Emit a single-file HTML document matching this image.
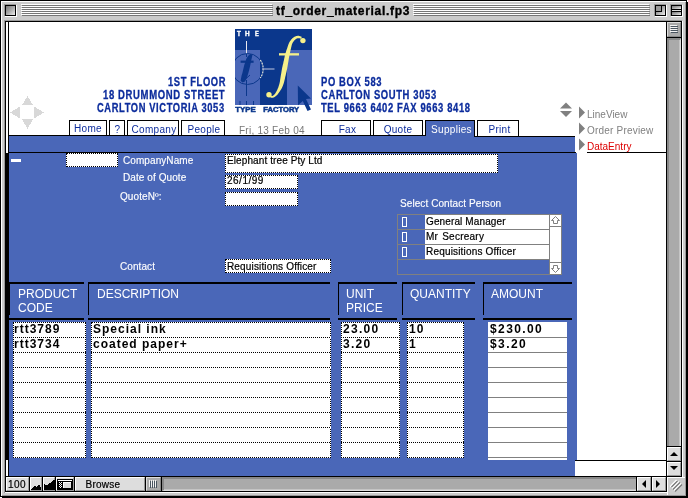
<!DOCTYPE html>
<html><head><meta charset="utf-8"><style>
*{margin:0;padding:0;box-sizing:border-box}
html,body{width:688px;height:498px;overflow:hidden;background:#fff;position:relative;font-family:"Liberation Sans",sans-serif}
.a{position:absolute}
.k{background:#000}
.w{background:#fff}
.g{background:#ccc}
.bl{background:#4a67b8}
.t{position:absolute;white-space:pre;line-height:12px;margin-top:1px}
.lab{font-size:10px;color:#fff;letter-spacing:0.08px;-webkit-text-stroke:0.15px #fff}
.fld{position:absolute;background:#fff;border:1px dotted #000}
.tab{position:absolute;top:120px;height:16px;border:1px solid #000;border-bottom:none;background:#fff;color:#0c2c9c;font-size:10px;text-align:center;line-height:16px;letter-spacing:0.3px}
.adr{position:absolute;font-weight:bold;font-size:12px;color:#0c2c9c;-webkit-text-stroke:0.3px #0c2c9c;white-space:pre;line-height:13px;margin-top:1px}
.hd{position:absolute;color:#fff;font-size:12px;line-height:14px;white-space:pre}
.dt{position:absolute;font-weight:bold;font-size:12px;letter-spacing:1px;line-height:15px;white-space:pre;color:#000;margin-top:1px}
</style></head><body>
<div style="position:absolute;left:0;top:0;width:688px;height:498px;background:#fff;will-change:transform">

<!-- window frame -->
<div class="a g" style="left:0;top:0;width:687px;height:497px;border:1px solid #000"></div>
<div class="a k" style="left:687px;top:2px;width:1px;height:496px"></div>
<div class="a k" style="left:2px;top:497px;width:686px;height:1px"></div>
<div class="a w" style="left:1px;top:1px;width:685px;height:1px"></div>
<div class="a w" style="left:1px;top:1px;width:1px;height:495px"></div>
<div class="a" style="left:685px;top:2px;width:1px;height:494px;background:#999"></div>
<div class="a" style="left:2px;top:495px;width:684px;height:1px;background:#999"></div>
<div class="a" style="left:4px;top:20px;width:678px;height:1px;background:#999"></div>
<div class="a" style="left:4px;top:20px;width:1px;height:473px;background:#999"></div>
<div class="a w" style="left:682px;top:21px;width:1px;height:472px"></div>
<div class="a w" style="left:5px;top:492px;width:678px;height:1px"></div>
<div class="a k" style="left:5px;top:21px;width:677px;height:471px"></div>

<!-- title bar stripes -->
<svg class="a" style="left:0;top:0" width="688" height="20" shape-rendering="crispEdges">
<g fill="#fff"><rect x="21" y="4" width="251" height="1"/><rect x="21" y="6" width="251" height="1"/><rect x="21" y="8" width="251" height="1"/><rect x="21" y="10" width="251" height="1"/><rect x="21" y="12" width="251" height="1"/><rect x="21" y="14" width="251" height="1"/>
<rect x="413" y="4" width="236" height="1"/><rect x="413" y="6" width="236" height="1"/><rect x="413" y="8" width="236" height="1"/><rect x="413" y="10" width="236" height="1"/><rect x="413" y="12" width="236" height="1"/><rect x="413" y="14" width="236" height="1"/></g>
<g fill="#777"><rect x="22" y="5" width="251" height="1"/><rect x="22" y="7" width="251" height="1"/><rect x="22" y="9" width="251" height="1"/><rect x="22" y="11" width="251" height="1"/><rect x="22" y="13" width="251" height="1"/><rect x="22" y="15" width="251" height="1"/>
<rect x="414" y="5" width="236" height="1"/><rect x="414" y="7" width="236" height="1"/><rect x="414" y="9" width="236" height="1"/><rect x="414" y="11" width="236" height="1"/><rect x="414" y="13" width="236" height="1"/><rect x="414" y="15" width="236" height="1"/></g>
<!-- close box -->
<rect x="4" y="4" width="12" height="1" fill="#999"/><rect x="4" y="4" width="1" height="12" fill="#999"/>
<rect x="5" y="16" width="12" height="1" fill="#fff"/><rect x="16" y="5" width="1" height="12" fill="#fff"/>
<rect x="5" y="5" width="11" height="11" fill="#000"/>
<defs><linearGradient id="cg" x1="0" y1="0" x2="1" y2="1"><stop offset="0" stop-color="#777"/><stop offset="0.5" stop-color="#aaa"/><stop offset="1" stop-color="#eee"/></linearGradient>
<linearGradient id="cg2" x1="0" y1="0" x2="1" y2="1"><stop offset="0" stop-color="#eee"/><stop offset="1" stop-color="#999"/></linearGradient></defs>
<rect x="6" y="6" width="9" height="9" fill="url(#cg)"/>
<!-- zoom box -->
<rect x="654" y="4" width="12" height="1" fill="#999"/><rect x="654" y="4" width="1" height="12" fill="#999"/>
<rect x="655" y="16" width="12" height="1" fill="#fff"/><rect x="666" y="5" width="1" height="12" fill="#fff"/>
<rect x="655" y="5" width="11" height="11" fill="#000"/>
<rect x="656" y="6" width="9" height="9" fill="url(#cg)"/>
<rect x="661" y="5" width="1" height="7" fill="#000"/><rect x="655" y="11" width="7" height="1" fill="#000"/>
<rect x="656" y="6" width="5" height="5" fill="#999"/>
<!-- collapse box -->
<rect x="670" y="4" width="12" height="1" fill="#999"/><rect x="670" y="4" width="1" height="12" fill="#999"/>
<rect x="671" y="16" width="12" height="1" fill="#fff"/><rect x="682" y="5" width="1" height="12" fill="#fff"/>
<rect x="671" y="5" width="11" height="11" fill="#000"/>
<rect x="672" y="6" width="9" height="3" fill="url(#cg)"/>
<rect x="672" y="10" width="9" height="1" fill="#ddd"/>
<rect x="672" y="12" width="9" height="3" fill="url(#cg)"/>
</svg>
<div class="t" style="left:276px;top:4px;font-weight:bold;font-size:12px;letter-spacing:0.7px;color:#000;-webkit-text-stroke:0.35px #000">tf_order_material.fp3</div>

<!-- content white area -->
<div class="a w" style="left:6px;top:22px;width:660px;height:454px"></div>
<div class="a k" style="left:8px;top:22px;width:1px;height:454px"></div>
<div class="a k" style="left:6px;top:153px;width:3px;height:307px"></div>

<!-- vertical scrollbar -->
<div class="a" style="left:667px;top:22px;width:14px;height:15px;background:#aaa;border-top:1px solid #ddd;border-left:1px solid #ddd;border-right:1px solid #888;border-bottom:1px solid #888"></div>
<svg class="a" style="left:667px;top:22px" width="14" height="15" shape-rendering="crispEdges">
<g fill="#f4f4f4"><rect x="3" y="3" width="7" height="1"/><rect x="3" y="5" width="7" height="1"/><rect x="3" y="7" width="7" height="1"/><rect x="3" y="9" width="7" height="1"/></g>
<g fill="#4a5560"><rect x="4" y="4" width="7" height="1"/><rect x="4" y="6" width="7" height="1"/><rect x="4" y="8" width="7" height="1"/><rect x="4" y="10" width="7" height="1"/></g>
</svg>
<div class="a k" style="left:667px;top:37px;width:14px;height:1px"></div>
<div class="a" style="left:667px;top:38px;width:14px;height:408px;background:#aaa;border-top:2px solid #888;border-left:2px solid #888;border-right:1px solid #ddd;box-shadow:inset -1px 0 #c4c4c4"></div>
<div class="a k" style="left:667px;top:446px;width:14px;height:1px"></div>
<div class="a" style="left:667px;top:447px;width:14px;height:14px;background:#ddd;border-top:1px solid #fff;border-left:1px solid #fff;border-right:1px solid #999;border-bottom:1px solid #999"></div>
<div class="a k" style="left:667px;top:461px;width:14px;height:1px"></div>
<div class="a" style="left:667px;top:462px;width:14px;height:14px;background:#ddd;border-top:1px solid #fff;border-left:1px solid #fff;border-right:1px solid #999;border-bottom:1px solid #999"></div>
<svg class="a" style="left:667px;top:447px" width="14" height="29">
<path d="M3 9 L11 9 L7 5 Z" fill="#000"/>
<path d="M3 19 L11 19 L7 23 Z" fill="#000"/>
</svg>

<!-- status bar -->
<div class="a" style="left:6px;top:477px;width:23px;height:14px;background:#ddd;border-top:1px solid #fff;border-left:1px solid #fff;border-right:1px solid #999;border-bottom:1px solid #999"></div>
<div class="t" style="left:8px;top:478px;font-size:10px;letter-spacing:0.5px;color:#000;-webkit-text-stroke:0.2px #000">100</div>
<div class="a" style="left:30px;top:477px;width:12px;height:14px;background:#ddd;border-top:1px solid #fff;border-left:1px solid #fff;border-right:1px solid #999;border-bottom:1px solid #999"></div>
<div class="a" style="left:43px;top:477px;width:12px;height:14px;background:#ddd;border-top:1px solid #fff;border-left:1px solid #fff;border-right:1px solid #999;border-bottom:1px solid #999"></div>
<div class="a" style="left:56px;top:477px;width:18px;height:14px;background:#ddd;border-top:1px solid #fff;border-left:1px solid #fff;border-right:1px solid #999;border-bottom:1px solid #999"></div>
<div class="a" style="left:75px;top:477px;width:70px;height:14px;background:#ddd;border-top:1px solid #fff;border-left:1px solid #fff;border-right:1px solid #999;border-bottom:1px solid #999"></div>
<div class="t" style="left:85.5px;top:478px;font-size:10px;letter-spacing:0.25px;color:#000;-webkit-text-stroke:0.2px #000">Browse</div>
<svg class="a" style="left:30px;top:477px" width="44" height="14" shape-rendering="crispEdges">
<path d="M1 12.5 L1 12 L5 9 L6.5 10 L9 7 L11 10.5 L11 12.5 Z" fill="#000"/>
<path d="M14 12.5 L14 6.5 L16.8 8.6 L24.5 2.5 L24.5 12.5 Z" fill="#000"/>
<rect x="27" y="2" width="16" height="11" fill="#000"/>
<rect x="28" y="3" width="14" height="1" fill="#fff"/>
<rect x="28" y="5" width="14" height="7" fill="#000"/>
<g fill="#fff"><rect x="29" y="5" width="1" height="1"/><rect x="31" y="5" width="1" height="1"/><rect x="30" y="6" width="1" height="1"/><rect x="29" y="7" width="1" height="1"/><rect x="31" y="7" width="1" height="1"/><rect x="30" y="8" width="1" height="1"/><rect x="29" y="9" width="1" height="1"/><rect x="31" y="9" width="1" height="1"/><rect x="30" y="10" width="1" height="1"/></g>
<rect x="33" y="5" width="8" height="6" fill="#fff"/>
<rect x="34" y="6" width="7" height="5" fill="#ddd"/>
</svg>
<!-- h scrollbar -->
<div class="a" style="left:146px;top:477px;width:15px;height:14px;background:#aaa;border-top:1px solid #ddd;border-left:1px solid #ddd;border-right:1px solid #888;border-bottom:1px solid #888"></div>
<svg class="a" style="left:146px;top:477px" width="15" height="14" shape-rendering="crispEdges">
<g fill="#f4f4f4"><rect x="3" y="3" width="1" height="7"/><rect x="5" y="3" width="1" height="7"/><rect x="7" y="3" width="1" height="7"/><rect x="9" y="3" width="1" height="7"/></g>
<g fill="#4a5560"><rect x="4" y="4" width="1" height="7"/><rect x="6" y="4" width="1" height="7"/><rect x="8" y="4" width="1" height="7"/><rect x="10" y="4" width="1" height="7"/></g>
</svg>
<div class="a" style="left:162px;top:477px;width:474px;height:14px;background:#aaa;border-top:2px solid #888;border-left:2px solid #888;border-bottom:1px solid #ddd;box-shadow:inset 0 -1px #c4c4c4"></div>
<div class="a" style="left:637px;top:477px;width:14px;height:14px;background:#ddd;border-top:1px solid #fff;border-left:1px solid #fff;border-right:1px solid #999;border-bottom:1px solid #999"></div>
<div class="a" style="left:652px;top:477px;width:14px;height:14px;background:#ddd;border-top:1px solid #fff;border-left:1px solid #fff;border-right:1px solid #999;border-bottom:1px solid #999"></div>
<svg class="a" style="left:637px;top:477px" width="29" height="14">
<path d="M9 3 L9 11 L5 7 Z" fill="#000"/>
<path d="M19 3 L19 11 L23 7 Z" fill="#000"/>
</svg>
<!-- grow box -->
<div class="a g" style="left:667px;top:477px;width:18px;height:18px;border-top:1px solid #fff;border-left:1px solid #fff"></div>
<svg class="a" style="left:667px;top:477px" width="18" height="18" shape-rendering="crispEdges">
<g fill="#fff"><path d="M3 9 h1 v-1 h1 v-1 h1 v-1 h1 v-1 h1 v-1 h1 v-1 h1 v1 h-1 v1 h-1 v1 h-1 v1 h-1 v1 h-1 v1 h-1 v1 h-1z"/></g>
</svg>
<svg class="a" style="left:667px;top:477px" width="18" height="18">
<g stroke-width="1.2"><line x1="3.5" y1="9" x2="9.5" y2="3" stroke="#fff"/><line x1="4.5" y1="10" x2="10.5" y2="4" stroke="#777"/>
<line x1="5" y1="11.5" x2="12" y2="4.5" stroke="#fff"/><line x1="6" y1="12.5" x2="13" y2="5.5" stroke="#777"/>
<line x1="7" y1="13.5" x2="14" y2="6.5" stroke="#fff"/><line x1="8" y1="14.5" x2="15" y2="7.5" stroke="#777"/></g>
</svg>

<!-- header area -->
<svg class="a" style="left:8px;top:94px" width="40" height="40" shape-rendering="crispEdges">
<g fill="#d8d8d8">
<path d="M19.5 2 L25 11 L14 11 Z"/>
<path d="M19.5 35 L25 25 L14 25 Z"/>
<path d="M2 18.5 L12 12.5 L12 24.5 Z"/>
<path d="M36 18.5 L26 12.5 L26 24.5 Z"/>
</g></svg>

<div class="adr" style="left:168px;top:75px;letter-spacing:0.8px;transform:scaleX(0.78);transform-origin:0 0">1ST FLOOR</div>
<div class="adr" style="left:102.5px;top:88px;letter-spacing:0.8px;transform:scaleX(0.792);transform-origin:0 0">18 DRUMMOND STREET</div>
<div class="adr" style="left:97px;top:101px;letter-spacing:0.8px;transform:scaleX(0.777);transform-origin:0 0">CARLTON VICTORIA 3053</div>
<div class="adr" style="left:321px;top:75px;letter-spacing:0.8px;transform:scaleX(0.784);transform-origin:0 0">PO BOX 583</div>
<div class="adr" style="left:321px;top:88px;letter-spacing:0.8px;transform:scaleX(0.786);transform-origin:0 0">CARLTON SOUTH 3053</div>
<div class="adr" style="left:321px;top:101px;letter-spacing:0.8px;transform:scaleX(0.784);transform-origin:0 0">TEL 9663 6402 FAX 9663 8418</div>

<!-- logo -->
<svg class="a" style="left:235px;top:29px" width="80" height="84">
<defs><clipPath id="lc"><rect x="0" y="0" width="77" height="76"/></clipPath></defs>
<rect x="0" y="0" width="77" height="76" fill="#0b378c"/>
<rect x="0" y="21" width="25" height="55" fill="#4a67b8"/>
<rect x="52" y="21" width="25" height="55" fill="#4a67b8"/>
<g font-family="Liberation Sans" font-weight="bold" font-size="6.4" fill="#fff" stroke="#fff" stroke-width="0.35">
<text x="2" y="7" textLength="3.8" lengthAdjust="spacingAndGlyphs">T</text><text x="10" y="7" textLength="4.6" lengthAdjust="spacingAndGlyphs">H</text><text x="20" y="7" textLength="3.8" lengthAdjust="spacingAndGlyphs">E</text></g>
<line x1="11.5" y1="12" x2="11.5" y2="25" stroke="#e8e8f0" stroke-width="1"/>
<line x1="11.5" y1="25" x2="11.5" y2="28" stroke="#0b378c" stroke-width="1"/>
<line x1="11.5" y1="51" x2="11.5" y2="67" stroke="#0b378c" stroke-width="1"/>
<g clip-path="url(#lc)">
<circle cx="12.5" cy="40" r="15.5" fill="none" stroke="#0b378c" stroke-width="1"/>
</g>
<path d="M25.3 31 A15.5 15.5 0 0 1 25.3 49" fill="none" stroke="#f0f0e0" stroke-width="1.1" stroke-dasharray="2 1"/>
<line x1="27" y1="40" x2="39.5" y2="40" stroke="#9aa8cc" stroke-width="1.3"/>
<path d="M15.8 25 L17.4 26.2 L16.2 31.5 L15 37.5 L13.5 43.5 L12 48.5 L10 52.6 L7.4 53.4 L5.6 51.8 L6.6 46.5 L7.4 44 L8.2 40.5 L9.4 35.5 L10.4 33 L11.2 30 L13.2 26.8 Z" fill="#0b378c"/>
<rect x="5.6" y="31.6" width="13" height="2.2" fill="#0b378c"/>
<line x1="10.3" y1="50.3" x2="15" y2="46" stroke="#0b378c" stroke-width="1"/>
<line x1="5" y1="72" x2="5" y2="76" stroke="#0b378c"/><line x1="11.5" y1="72" x2="11.5" y2="76" stroke="#0b378c"/><line x1="18.5" y1="72" x2="18.5" y2="76" stroke="#0b378c"/>
<path d="M66.8 7.8 L66.4 7.7 L65.9 7.5 L65.2 7.2 L64.4 7.0 L63.6 6.8 L62.7 6.8 L61.9 6.9 L61.1 7.1 L60.3 7.4 L59.5 7.8 L58.8 8.2 L58.1 8.7 L57.4 9.3 L56.8 9.9 L56.2 10.6 L55.6 11.4 L55.0 12.2 L54.5 13.1 L54.0 14.1 L53.5 15.2 L53.1 16.2 L52.8 17.3 L52.4 18.4 L52.1 19.4 L51.8 20.3 L51.4 21.2 L51.2 22.1 L50.9 23.0 L50.6 24.0 L50.3 25.0 L50.0 26.1 L49.7 27.3 L49.5 28.5 L49.2 29.7 L49.0 30.9 L48.7 32.0 L48.4 33.2 L48.2 34.4 L47.9 35.5 L47.6 36.7 L47.4 37.8 L47.1 39.0 L46.9 40.2 L46.7 41.3 L46.5 42.5 L46.3 43.7 L46.1 44.9 L45.9 46.1 L45.7 47.3 L45.5 48.5 L45.3 49.8 L45.1 51.0 L45.0 52.1 L44.8 53.1 L44.6 54.0 L44.4 54.8 L44.2 55.6 L43.9 56.4 L43.7 57.1 L43.5 57.8 L43.3 58.5 L43.0 59.1 L42.8 59.6 L42.6 60.1 L42.3 60.7 L42.1 61.3 L41.7 61.9 L41.4 62.5 L41.1 63.1 L40.7 63.7 L40.4 64.3 L40.0 64.7 L39.7 65.2 L39.3 65.6 L38.9 65.9 L38.5 66.2 L38.2 66.5 L37.8 66.7 L37.5 66.9 L37.1 67.0 L36.6 67.1 L36.2 67.1 L35.7 67.2 L35.4 67.2 L35.6 68.8 L35.8 68.8 L36.2 68.8 L36.8 68.8 L37.3 68.8 L38.0 68.7 L38.6 68.5 L39.1 68.2 L39.7 67.9 L40.2 67.6 L40.7 67.2 L41.2 66.7 L41.8 66.3 L42.3 65.7 L42.8 65.2 L43.2 64.6 L43.7 63.9 L44.1 63.3 L44.5 62.7 L44.9 62.2 L45.3 61.6 L45.7 61.1 L46.0 60.5 L46.4 59.9 L46.7 59.2 L47.1 58.5 L47.4 57.7 L47.8 56.9 L48.1 56.1 L48.5 55.1 L48.8 54.1 L49.1 53.0 L49.4 51.8 L49.7 50.6 L50.0 49.3 L50.2 48.1 L50.5 46.9 L50.8 45.8 L51.0 44.6 L51.3 43.5 L51.6 42.3 L51.8 41.2 L52.1 40.0 L52.3 38.8 L52.5 37.7 L52.7 36.5 L52.9 35.3 L53.1 34.1 L53.3 33.0 L53.5 31.8 L53.7 30.5 L53.9 29.3 L54.1 28.2 L54.3 27.0 L54.5 26.0 L54.7 25.0 L54.9 24.1 L55.1 23.2 L55.3 22.3 L55.5 21.4 L55.7 20.4 L56.0 19.4 L56.2 18.3 L56.5 17.3 L56.7 16.2 L57.0 15.3 L57.3 14.5 L57.7 13.8 L58.1 13.1 L58.5 12.5 L59.0 11.9 L59.4 11.3 L59.9 10.9 L60.4 10.5 L60.9 10.1 L61.4 9.8 L61.9 9.5 L62.5 9.3 L62.9 9.2 L63.4 9.2 L63.9 9.2 L64.6 9.3 L65.2 9.5 L65.8 9.7 L66.2 9.8Z" fill="#f6f08a"/>
<circle cx="67.9" cy="11.6" r="2.7" fill="#f6f08a"/>
<circle cx="34" cy="65.8" r="2.7" fill="#f6f08a"/>
<rect x="44" y="24.2" width="20" height="2.3" fill="#f6f08a"/>
<path d="M62.8 56.5 L76 69.5 L71 70 L76 80.5 L72.5 82 L67.8 72 L63 76.2 Z" fill="#0b378c"/>
<g font-family="Liberation Sans" font-weight="bold" font-size="6.6" fill="#0b378c" stroke="#0b378c" stroke-width="0.45">
<text x="0.3" y="83" textLength="20.5" lengthAdjust="spacingAndGlyphs">TYPE</text>
<text x="28.2" y="83" textLength="36" lengthAdjust="spacingAndGlyphs">FACTORY</text></g>
</svg>

<!-- tabs -->
<div class="tab" style="left:69px;width:38px">Home</div>
<div class="tab" style="left:109px;width:16px;padding-top:1px;padding-left:1px">?</div>
<div class="tab" style="left:127px;width:52px;padding-top:1px;padding-left:2px">Company</div>
<div class="tab" style="left:181px;width:44px;padding-top:1px;padding-left:2px">People</div>
<div class="t" style="left:239px;top:124px;font-size:10px;color:#777;letter-spacing:0.25px">Fri, 13 Feb 04</div>
<div class="tab" style="left:321px;width:50px;padding-left:3px;padding-top:1px">Fax</div>
<div class="tab" style="left:373px;width:50px;padding-top:1px">Quote</div>
<div class="tab" style="left:425px;width:50px;background:#4a67b8;color:#fff;padding-left:3px;padding-top:1px">Supplies</div>
<div class="tab" style="left:477px;width:42px;padding-top:1px;padding-left:3px">Print</div>

<!-- right nav -->
<svg class="a" style="left:559px;top:102px" width="30" height="50">
<path d="M1 6.5 L13 6.5 L7 0.5 Z" fill="#808080"/>
<path d="M1 9 L13 9 L7 15 Z" fill="#808080"/>
<path d="M20 4.5 L20 16.5 L26 10.5 Z" fill="#808080"/>
<path d="M20 20.5 L20 32.5 L26 26.5 Z" fill="#808080"/>
<path d="M20 36.5 L20 48.5 L26 42.5 Z" fill="#808080"/>
</svg>
<div class="t" style="left:587px;top:108px;font-size:10px;color:#808080;letter-spacing:0px">LineView</div>
<div class="t" style="left:587px;top:124px;font-size:10px;color:#808080;letter-spacing:0.2px">Order Preview</div>
<div class="t" style="left:587px;top:140px;font-size:10px;color:#dd0000">DataEntry</div>
<div class="a k" style="left:587px;top:152px;width:79px;height:1px"></div>

<!-- band -->
<div class="a k" style="left:9px;top:135px;width:416px;height:1px"></div>
<div class="a bl" style="left:9px;top:136px;width:566px;height:16px"></div>
<div class="a k" style="left:474px;top:136px;width:101px;height:1px"></div>
<div class="a k" style="left:9px;top:152px;width:567px;height:1px"></div>

<!-- body -->
<div class="a bl" style="left:9px;top:153px;width:568px;height:307px"></div>
<div class="a bl" style="left:9px;top:460px;width:566px;height:16px"></div>
<div class="a k" style="left:575px;top:460px;width:91px;height:1px"></div>
<div class="a w" style="left:11px;top:159px;width:10px;height:3px"></div>

<div class="fld" style="left:66px;top:153px;width:52px;height:14px"></div>
<div class="t lab" style="left:123px;top:154px">CompanyName</div>
<div class="t lab" style="left:123px;top:171px">Date of Quote</div>
<div class="t lab" style="left:120px;top:190px">QuoteNº:</div>
<div class="t lab" style="left:120px;top:260px">Contact</div>
<div class="fld" style="left:225px;top:154px;width:273px;height:19px"></div>
<div class="t" style="left:227px;top:154px;font-size:10px;letter-spacing:0.1px;-webkit-text-stroke:0.2px #000">Elephant tree Pty Ltd</div>
<div class="fld" style="left:225px;top:175px;width:73px;height:14px"></div>
<div class="t" style="left:227px;top:174px;font-size:10px;-webkit-text-stroke:0.2px #000;letter-spacing:0.5px">26/1/99</div>
<div class="fld" style="left:225px;top:192px;width:73px;height:14px"></div>
<div class="fld" style="left:225px;top:259px;width:106px;height:14px"></div>
<div class="t" style="left:227px;top:260px;font-size:10px;letter-spacing:0.15px;-webkit-text-stroke:0.2px #000">Requisitions Officer</div>

<!-- portal -->
<div class="t lab" style="left:400px;top:197px">Select Contact Person</div>
<div class="a" style="left:397px;top:214px;width:165px;height:61px;border:1px solid #808080"></div>
<div class="a w" style="left:425px;top:215px;width:124px;height:14px"></div>
<div class="a w" style="left:425px;top:230px;width:124px;height:14px"></div>
<div class="a w" style="left:425px;top:245px;width:124px;height:14px"></div>
<div class="a" style="left:398px;top:229px;width:151px;height:1px;background:#808080"></div>
<div class="a" style="left:398px;top:244px;width:151px;height:1px;background:#808080"></div>
<div class="a" style="left:398px;top:259px;width:151px;height:1px;background:#808080"></div>
<div class="a" style="left:402px;top:217px;width:5px;height:10px;border:1px solid #fff"></div>
<div class="a" style="left:402px;top:232px;width:5px;height:10px;border:1px solid #fff"></div>
<div class="a" style="left:402px;top:247px;width:5px;height:10px;border:1px solid #fff"></div>
<div class="t" style="left:426px;top:215px;font-size:10px;letter-spacing:0.12px;-webkit-text-stroke:0.2px #000">General Manager</div>
<div class="t" style="left:426px;top:230px;font-size:10px;letter-spacing:0.25px;word-spacing:1px;-webkit-text-stroke:0.2px #000">Mr Secreary</div>
<div class="t" style="left:426px;top:245px;font-size:10px;letter-spacing:0.18px;-webkit-text-stroke:0.2px #000">Requisitions Officer</div>
<div class="a w" style="left:549px;top:214px;width:13px;height:61px;border:1px solid #808080"></div>
<div class="a" style="left:549px;top:226px;width:13px;height:1px;background:#808080"></div>
<div class="a" style="left:549px;top:262px;width:13px;height:1px;background:#808080"></div>
<svg class="a" style="left:549px;top:214px" width="13" height="61">
<path d="M6.5 2.5 L10.5 6.5 L8.5 6.5 L8.5 9.5 L4.5 9.5 L4.5 6.5 L2.5 6.5 Z" fill="none" stroke="#808080" stroke-width="1"/>
<path d="M6.5 58.5 L10.5 54.5 L8.5 54.5 L8.5 51.5 L4.5 51.5 L4.5 54.5 L2.5 54.5 Z" fill="none" stroke="#808080" stroke-width="1"/>
</svg>

<!-- table header -->
<div class="a k" style="left:9px;top:282px;width:75px;height:2px"></div>
<div class="a k" style="left:9px;top:284px;width:1px;height:31px"></div>
<div class="a k" style="left:9px;top:318px;width:75px;height:2px"></div>
<div class="a k" style="left:88px;top:282px;width:242px;height:2px"></div>
<div class="a k" style="left:88px;top:284px;width:1px;height:31px"></div>
<div class="a k" style="left:88px;top:318px;width:242px;height:2px"></div>
<div class="a k" style="left:338px;top:282px;width:59px;height:2px"></div>
<div class="a k" style="left:338px;top:284px;width:1px;height:31px"></div>
<div class="a k" style="left:338px;top:318px;width:59px;height:2px"></div>
<div class="a k" style="left:402px;top:282px;width:73px;height:2px"></div>
<div class="a k" style="left:402px;top:284px;width:1px;height:31px"></div>
<div class="a k" style="left:402px;top:318px;width:73px;height:2px"></div>
<div class="a k" style="left:483px;top:282px;width:89px;height:2px"></div>
<div class="a k" style="left:483px;top:284px;width:1px;height:31px"></div>
<div class="a k" style="left:483px;top:318px;width:89px;height:2px"></div>
<div class="hd" style="left:18px;top:287px">PRODUCT<br>CODE</div>
<div class="hd" style="left:97px;top:287px">DESCRIPTION</div>
<div class="hd" style="left:346px;top:287px">UNIT<br>PRICE</div>
<div class="hd" style="left:410px;top:287px">QUANTITY</div>
<div class="hd" style="left:491px;top:287px">AMOUNT</div>

<!-- table rows -->
<div class="fld" style="left:13px;top:322px;width:73px;height:136px"></div>
<div class="a" style="left:13px;top:337px;width:73px;height:1px;background:repeating-linear-gradient(90deg,#000 0 1px,#fff 1px 2px)"></div>
<div class="a" style="left:13px;top:352px;width:73px;height:1px;background:repeating-linear-gradient(90deg,#000 0 1px,#fff 1px 2px)"></div>
<div class="a" style="left:13px;top:367px;width:73px;height:1px;background:repeating-linear-gradient(90deg,#000 0 1px,#fff 1px 2px)"></div>
<div class="a" style="left:13px;top:382px;width:73px;height:1px;background:repeating-linear-gradient(90deg,#000 0 1px,#fff 1px 2px)"></div>
<div class="a" style="left:13px;top:397px;width:73px;height:1px;background:repeating-linear-gradient(90deg,#000 0 1px,#fff 1px 2px)"></div>
<div class="a" style="left:13px;top:412px;width:73px;height:1px;background:repeating-linear-gradient(90deg,#000 0 1px,#fff 1px 2px)"></div>
<div class="a" style="left:13px;top:427px;width:73px;height:1px;background:repeating-linear-gradient(90deg,#000 0 1px,#fff 1px 2px)"></div>
<div class="a" style="left:13px;top:442px;width:73px;height:1px;background:repeating-linear-gradient(90deg,#000 0 1px,#fff 1px 2px)"></div>
<div class="fld" style="left:91px;top:322px;width:240px;height:136px"></div>
<div class="a" style="left:91px;top:337px;width:240px;height:1px;background:repeating-linear-gradient(90deg,#000 0 1px,#fff 1px 2px)"></div>
<div class="a" style="left:91px;top:352px;width:240px;height:1px;background:repeating-linear-gradient(90deg,#000 0 1px,#fff 1px 2px)"></div>
<div class="a" style="left:91px;top:367px;width:240px;height:1px;background:repeating-linear-gradient(90deg,#000 0 1px,#fff 1px 2px)"></div>
<div class="a" style="left:91px;top:382px;width:240px;height:1px;background:repeating-linear-gradient(90deg,#000 0 1px,#fff 1px 2px)"></div>
<div class="a" style="left:91px;top:397px;width:240px;height:1px;background:repeating-linear-gradient(90deg,#000 0 1px,#fff 1px 2px)"></div>
<div class="a" style="left:91px;top:412px;width:240px;height:1px;background:repeating-linear-gradient(90deg,#000 0 1px,#fff 1px 2px)"></div>
<div class="a" style="left:91px;top:427px;width:240px;height:1px;background:repeating-linear-gradient(90deg,#000 0 1px,#fff 1px 2px)"></div>
<div class="a" style="left:91px;top:442px;width:240px;height:1px;background:repeating-linear-gradient(90deg,#000 0 1px,#fff 1px 2px)"></div>
<div class="fld" style="left:341px;top:322px;width:59px;height:136px"></div>
<div class="a" style="left:341px;top:337px;width:59px;height:1px;background:repeating-linear-gradient(90deg,#000 0 1px,#fff 1px 2px)"></div>
<div class="a" style="left:341px;top:352px;width:59px;height:1px;background:repeating-linear-gradient(90deg,#000 0 1px,#fff 1px 2px)"></div>
<div class="a" style="left:341px;top:367px;width:59px;height:1px;background:repeating-linear-gradient(90deg,#000 0 1px,#fff 1px 2px)"></div>
<div class="a" style="left:341px;top:382px;width:59px;height:1px;background:repeating-linear-gradient(90deg,#000 0 1px,#fff 1px 2px)"></div>
<div class="a" style="left:341px;top:397px;width:59px;height:1px;background:repeating-linear-gradient(90deg,#000 0 1px,#fff 1px 2px)"></div>
<div class="a" style="left:341px;top:412px;width:59px;height:1px;background:repeating-linear-gradient(90deg,#000 0 1px,#fff 1px 2px)"></div>
<div class="a" style="left:341px;top:427px;width:59px;height:1px;background:repeating-linear-gradient(90deg,#000 0 1px,#fff 1px 2px)"></div>
<div class="a" style="left:341px;top:442px;width:59px;height:1px;background:repeating-linear-gradient(90deg,#000 0 1px,#fff 1px 2px)"></div>
<div class="fld" style="left:407px;top:322px;width:57px;height:136px"></div>
<div class="a" style="left:407px;top:337px;width:57px;height:1px;background:repeating-linear-gradient(90deg,#000 0 1px,#fff 1px 2px)"></div>
<div class="a" style="left:407px;top:352px;width:57px;height:1px;background:repeating-linear-gradient(90deg,#000 0 1px,#fff 1px 2px)"></div>
<div class="a" style="left:407px;top:367px;width:57px;height:1px;background:repeating-linear-gradient(90deg,#000 0 1px,#fff 1px 2px)"></div>
<div class="a" style="left:407px;top:382px;width:57px;height:1px;background:repeating-linear-gradient(90deg,#000 0 1px,#fff 1px 2px)"></div>
<div class="a" style="left:407px;top:397px;width:57px;height:1px;background:repeating-linear-gradient(90deg,#000 0 1px,#fff 1px 2px)"></div>
<div class="a" style="left:407px;top:412px;width:57px;height:1px;background:repeating-linear-gradient(90deg,#000 0 1px,#fff 1px 2px)"></div>
<div class="a" style="left:407px;top:427px;width:57px;height:1px;background:repeating-linear-gradient(90deg,#000 0 1px,#fff 1px 2px)"></div>
<div class="a" style="left:407px;top:442px;width:57px;height:1px;background:repeating-linear-gradient(90deg,#000 0 1px,#fff 1px 2px)"></div>
<div class="a w" style="left:488px;top:322px;width:79px;height:138px"></div>
<div class="a" style="left:488px;top:337px;width:79px;height:1px;background:#808080"></div>
<div class="a" style="left:488px;top:352px;width:79px;height:1px;background:#808080"></div>
<div class="a" style="left:488px;top:367px;width:79px;height:1px;background:#808080"></div>
<div class="a" style="left:488px;top:382px;width:79px;height:1px;background:#808080"></div>
<div class="a" style="left:488px;top:397px;width:79px;height:1px;background:#808080"></div>
<div class="a" style="left:488px;top:412px;width:79px;height:1px;background:#808080"></div>
<div class="a" style="left:488px;top:427px;width:79px;height:1px;background:#808080"></div>
<div class="a" style="left:488px;top:442px;width:79px;height:1px;background:#808080"></div>
<div class="a" style="left:488px;top:457px;width:79px;height:1px;background:#808080"></div>

<div class="dt" style="left:14px;top:321px">rtt3789</div>
<div class="dt" style="left:14px;top:336px">rtt3734</div>
<div class="dt" style="left:93px;top:321px">Special ink</div>
<div class="dt" style="left:93px;top:336px">coated paper+</div>
<div class="dt" style="left:343px;top:321px;letter-spacing:1.3px">23.00</div>
<div class="dt" style="left:343px;top:336px;letter-spacing:1.3px">3.20</div>
<div class="dt" style="left:409px;top:321px;letter-spacing:1px">10</div>
<div class="dt" style="left:409px;top:336px;letter-spacing:1px">1</div>
<div class="dt" style="left:490px;top:321px;letter-spacing:1.4px">$230.00</div>
<div class="dt" style="left:490px;top:336px;letter-spacing:1.4px">$3.20</div>

</div>
</body></html>
